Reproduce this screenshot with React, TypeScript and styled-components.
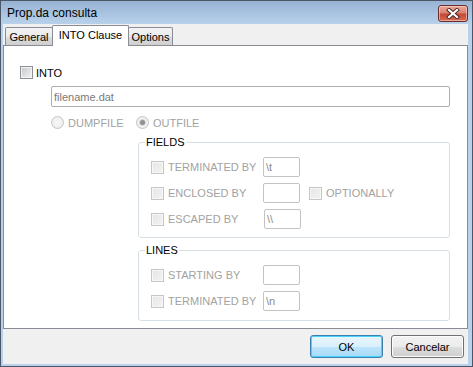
import React from "react";
import styled, { createGlobalStyle } from "styled-components";

const Global = createGlobalStyle`
  html, body { margin: 0; padding: 0; background: #ffffff; }
  body { font-family: "Liberation Sans", Arial, sans-serif; font-size: 11px; color: #000; }
  * { box-sizing: border-box; }
`;

const Window = styled.div`
  width: 473px;
  height: 367px;
  border: 1px solid #4b5667;
  background: #b9d1ea;
  display: flex;
  flex-direction: column;
`;

const TitleBar = styled.div`
  height: 23px;
  flex: none;
  display: flex;
  align-items: center;
  justify-content: space-between;
  padding: 0 4px 0 6px;
  background: linear-gradient(to bottom, #98b3d2 0%, #a9c4e1 55%, #b9d1ea 100%);
`;

const Title = styled.span`
  font-family: "Liberation Sans", Arial, sans-serif;
  font-size: 12px;
  color: #000;
  margin-top: 1px;
`;

const CloseButton = styled.button`
  width: 30px;
  height: 17px;
  margin-top: 2px;
  padding: 0;
  border: 1px solid #6e2d2d;
  border-radius: 3px;
  background: linear-gradient(to bottom, #e9a99a 0%, #d98271 45%, #c54a36 55%, #d36a52 100%);
  box-shadow: inset 0 0 0 1px rgba(255, 220, 210, 0.55);
  display: flex;
  align-items: center;
  justify-content: center;
`;

const Client = styled.div`
  flex: 1;
  margin: 0 4px 2px 2px;
  background: #f0f0f0;
  display: flex;
  flex-direction: column;
  padding-top: 1px;
`;

const TabStrip = styled.div`
  height: 20px;
  flex: none;
  display: flex;
  align-items: flex-end;
  padding-left: 2px;
`;

const Tab = styled.div<{ $active?: boolean; $w: number }>`
  width: ${(p) => p.$w}px;
  height: ${(p) => (p.$active ? 21 : 18)}px;
  margin-bottom: ${(p) => (p.$active ? -1 : 0)}px;
  margin-left: ${(p) => (p.$active ? -1 : 0)}px;
  position: relative;
  z-index: ${(p) => (p.$active ? 2 : 1)};
  border: 1px solid #898c95;
  border-bottom: none;
  border-radius: 2px 2px 0 0;
  background: ${(p) =>
    p.$active
      ? "#ffffff"
      : "linear-gradient(to bottom, #f2f2f2 0%, #ebebeb 50%, #dddddd 51%, #cfcfcf 100%)"};
  display: flex;
  align-items: center;
  justify-content: center;
  padding-bottom: ${(p) => (p.$active ? 2 : 0)}px;
  font-size: 11px;
  color: #000;
  & + & {
    margin-left: -1px;
  }
`;

const Panel = styled.div`
  flex: 1;
  background: #ffffff;
  border: 1px solid #898c95;
  padding: 20px 0 0 16px;
  display: flex;
  flex-direction: column;
`;

const CheckRow = styled.label<{ $gap?: number; $disabled?: boolean }>`
  display: flex;
  align-items: center;
  gap: ${(p) => p.$gap ?? 4}px;
  height: 13px;
  color: ${(p) => (p.$disabled ? "#a2a2a2" : "#000")};
  white-space: nowrap;
`;

const Check = styled.span<{ $disabled?: boolean }>`
  width: 13px;
  height: 13px;
  flex: none;
  border: 1px solid ${(p) => (p.$disabled ? "#c6c6c6" : "#8e8f8f")};
  background: ${(p) =>
    p.$disabled
      ? "linear-gradient(135deg, #e6e6e6 0%, #f2f2f2 100%)"
      : "linear-gradient(135deg, #c3c7cc 0%, #dfe1e3 55%, #f5f5f5 100%)"};
  box-shadow: inset 0 0 0 1px ${(p) => (p.$disabled ? "#f7f7f7" : "#f4f4f4")};
`;

const Indented = styled.div`
  margin-left: 31px;
  display: flex;
  flex-direction: column;
`;

const FileInput = styled.input`
  width: 399px;
  height: 21px;
  margin-top: 7px;
  border: 1px solid #abadb3;
  border-radius: 2px;
  padding: 0 2px;
  font-family: "Liberation Sans", Arial, sans-serif;
  font-size: 11px;
  color: #7a7a7a;
  background: #fff;
  outline: none;
`;

const RadioRow = styled.div`
  display: flex;
  align-items: center;
  height: 13px;
  margin-top: 9px;
`;

const RadioItem = styled.label<{ $w?: number }>`
  display: flex;
  align-items: center;
  gap: 4px;
  width: ${(p) => (p.$w ? `${p.$w}px` : "auto")};
  color: #a2a2a2;
  white-space: nowrap;
`;

const Radio = styled.span<{ $checked?: boolean }>`
  width: 13px;
  height: 13px;
  flex: none;
  border-radius: 50%;
  border: 1px solid #c4c4c4;
  background: ${(p) =>
    p.$checked
      ? "radial-gradient(circle, #8a8a8a 0, #9a9a9a 2.2px, #e2e2e2 3.2px, #f2f2f2 4px, #e8e8e8 100%)"
      : "radial-gradient(circle, #f6f6f6 0, #ececec 100%)"};
`;

const Group = styled.fieldset<{ $top: number }>`
  width: 312px;
  margin: ${(p) => p.$top}px 0 0 87px;
  padding: 0;
  border: 1px solid #d5dfe5;
  border-radius: 3px;
  min-inline-size: 0;
`;

const Legend = styled.legend`
  margin-left: 6px;
  padding: 0 1px;
  font-size: 11px;
  line-height: 13px;
  color: #000;
`;

const GroupBody = styled.div<{ $bottom: number }>`
  display: grid;
  grid-template-columns: 112px 37px auto;
  row-gap: 6px;
  align-items: center;
  padding: 8px 0 ${(p) => p.$bottom}px 12px;
`;

const SmallInput = styled.input<{ $shift?: number }>`
  width: 37px;
  height: 20px;
  margin-left: ${(p) => p.$shift ?? 0}px;
  border: 1px solid #c3c3c3;
  border-radius: 2px;
  padding: 0 2px;
  font-family: "Liberation Sans", Arial, sans-serif;
  font-size: 11px;
  color: #8a8a8a;
  background: #fff;
  outline: none;
`;

const Trailing = styled.div`
  margin-left: 9px;
`;

const Footer = styled.div`
  height: 35px;
  flex: none;
  display: flex;
  justify-content: flex-end;
  align-items: center;
  gap: 8px;
  padding-right: 4px;
`;

const Button = styled.button<{ $primary?: boolean }>`
  width: 73px;
  height: 23px;
  padding: 0;
  border-radius: 3px;
  font-family: "Liberation Sans", Arial, sans-serif;
  font-size: 11px;
  color: #000;
  border: 1px solid ${(p) => (p.$primary ? "#3c7fb1" : "#707070")};
  background: ${(p) =>
    p.$primary
      ? "linear-gradient(to bottom, #eaf6fd 0%, #d9f0fc 50%, #bee6fd 51%, #a7d9f5 100%)"
      : "linear-gradient(to bottom, #f2f2f2 0%, #ebebeb 50%, #dddddd 51%, #cfcfcf 100%)"};
  box-shadow: inset 0 0 0 1px ${(p) => (p.$primary ? "#48d1fa" : "#fcfcfc")};
`;

const CloseIcon = () => (
  <svg width="14" height="11" viewBox="0 0 14 11">
    <path d="M3 2 L11 9 M11 2 L3 9" stroke="#4a2323" strokeWidth="4" strokeLinecap="square" fill="none" />
    <path d="M3 2 L11 9 M11 2 L3 9" stroke="#ffffff" strokeWidth="2.2" strokeLinecap="square" fill="none" />
  </svg>
);

export default function App() {
  return (
    <>
      <Global />
      <Window>
        <TitleBar>
          <Title>Prop.da consulta</Title>
          <CloseButton aria-label="Fechar">
            <CloseIcon />
          </CloseButton>
        </TitleBar>
        <Client>
          <TabStrip>
            <Tab $w={48}>General</Tab>
            <Tab $w={77} $active>
              INTO Clause
            </Tab>
            <Tab $w={45}>Options</Tab>
          </TabStrip>
          <Panel>
            <CheckRow $gap={3}>
              <Check />
              INTO
            </CheckRow>
            <Indented>
              <FileInput readOnly defaultValue="filename.dat" />
              <RadioRow>
                <RadioItem $w={85}>
                  <Radio />
                  DUMPFILE
                </RadioItem>
                <RadioItem>
                  <Radio $checked />
                  OUTFILE
                </RadioItem>
              </RadioRow>
              <Group $top={7}>
                <Legend>FIELDS</Legend>
                <GroupBody $bottom={8}>
                  <CheckRow $disabled>
                    <Check $disabled />
                    TERMINATED BY
                  </CheckRow>
                  <SmallInput readOnly defaultValue="\t" />
                  <span />
                  <CheckRow $disabled>
                    <Check $disabled />
                    ENCLOSED BY
                  </CheckRow>
                  <SmallInput readOnly defaultValue="" />
                  <Trailing>
                    <CheckRow $disabled>
                      <Check $disabled />
                      OPTIONALLY
                    </CheckRow>
                  </Trailing>
                  <CheckRow $disabled>
                    <Check $disabled />
                    ESCAPED BY
                  </CheckRow>
                  <SmallInput readOnly defaultValue="\\" $shift={1} />
                  <span />
                </GroupBody>
              </Group>
              <Group $top={6}>
                <Legend>LINES</Legend>
                <GroupBody $bottom={9}>
                  <CheckRow $disabled>
                    <Check $disabled />
                    STARTING BY
                  </CheckRow>
                  <SmallInput readOnly defaultValue="" />
                  <span />
                  <CheckRow $disabled>
                    <Check $disabled />
                    TERMINATED BY
                  </CheckRow>
                  <SmallInput readOnly defaultValue="\n" />
                  <span />
                </GroupBody>
              </Group>
            </Indented>
          </Panel>
          <Footer>
            <Button $primary>OK</Button>
            <Button>Cancelar</Button>
          </Footer>
        </Client>
      </Window>
    </>
  );
}
